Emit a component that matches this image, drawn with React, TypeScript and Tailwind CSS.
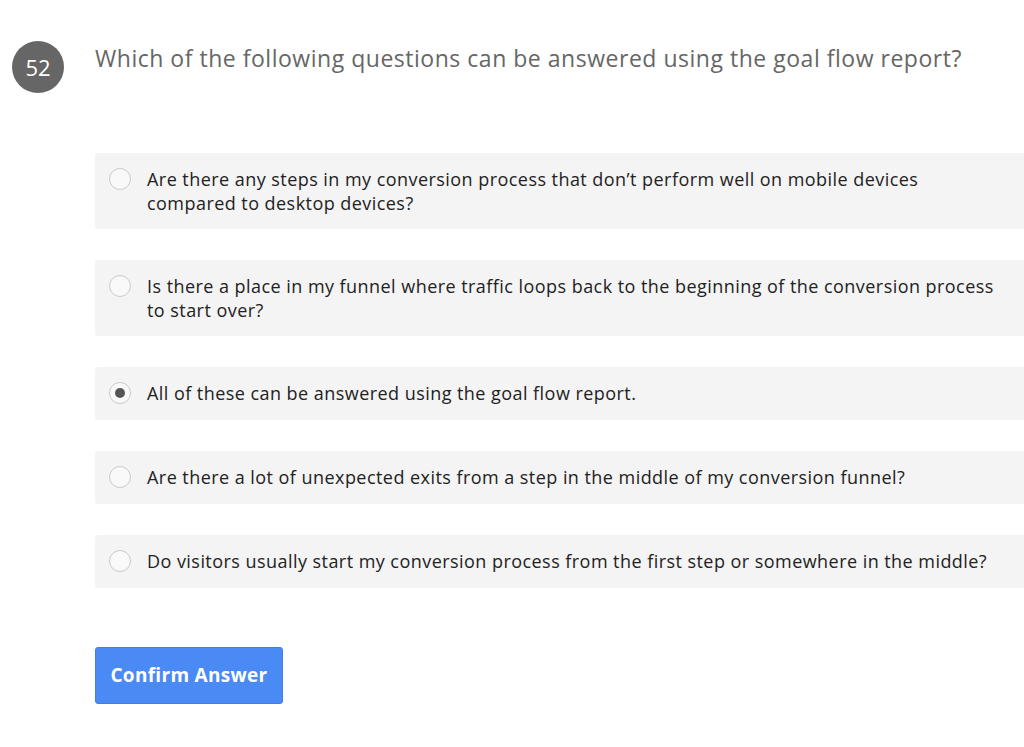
import React from "react";

const options = [
  { text: "Are there any steps in my conversion process that don’t perform well on mobile devices compared to desktop devices?", checked: false },
  { text: "Is there a place in my funnel where traffic loops back to the beginning of the conversion process to start over?", checked: false },
  { text: "All of these can be answered using the goal flow report.", checked: true },
  { text: "Are there a lot of unexpected exits from a step in the middle of my conversion funnel?", checked: false },
  { text: "Do visitors usually start my conversion process from the first step or somewhere in the middle?", checked: false },
];

export default function App() {
  return (
    <div className="w-[1024px] h-[747px] bg-white overflow-hidden" style={{ fontFamily: '"Open Sans", sans-serif' }}>
      <div className="flex items-start pt-[41px] pl-[12px]">
        <div className="w-[52px] h-[52px] rounded-full bg-[#666666] text-white flex items-center justify-center text-[22px] shrink-0">52</div>
        <div className="ml-[31px] mt-[1px] text-[23px] leading-[32px] tracking-[0.52px] text-[#666666] whitespace-nowrap">
          Which of the following questions can be answered using the goal flow report?
        </div>
      </div>
      <div className="ml-[95px] mt-[60px] w-[940px] flex flex-col gap-[31px]">
        {options.map((o, i) => (
          <div key={i} className="bg-[#f4f4f4] rounded-[3px] min-h-[53px] flex items-start pl-[14px] pr-[24px] py-[14px]">
            <div className="w-[22px] h-[22px] mt-[1px] rounded-full border-[1.5px] border-[#cacaca] bg-[#f9f9f9] flex items-center justify-center shrink-0">
              {o.checked && <div className="w-[10px] h-[10px] rounded-full bg-[#555555]" />}
            </div>
            <div className="ml-[16px] text-[18px] leading-[24px] tracking-[0.45px] text-[#222222]">{o.text}</div>
          </div>
        ))}
      </div>
      <button className="ml-[95px] mt-[59px] w-[188px] h-[57px] rounded-[3px] bg-[#4a8af4] border border-[#3f7fe8] text-white font-bold text-[19px] tracking-[0.3px]">
        Confirm Answer
      </button>
    </div>
  );
}
